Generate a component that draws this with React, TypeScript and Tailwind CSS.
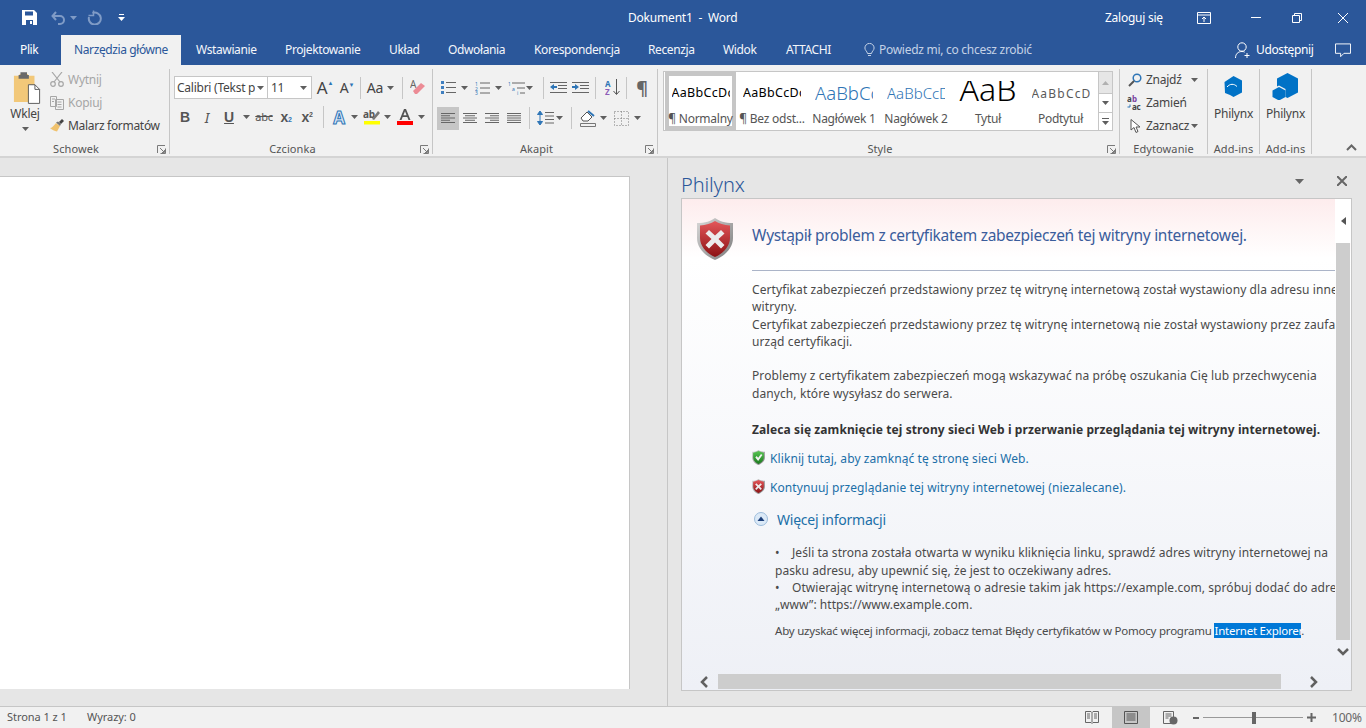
import React from "react";

const Cell = ({ className = "", children }: { className?: string; children?: React.ReactNode }) => (
  <div className={`flex items-center justify-center shrink-0 ${className}`}>{children}</div>
);

const Caret = ({ color = "#5f5f5f" }: { color?: string }) => (
  <svg width="7" height="4" viewBox="0 0 7 4"><path d="M0 0h7L3.500 4z" fill={color} /></svg>
);

const Launcher = () => (
  <svg width="9" height="9" viewBox="0 0 9 9" fill="none" stroke="#7a7a7a"><path d="M.5 8V.5H8M8.500 3.500v5h-5M3 3l4 4M7.500 5v2.500H5" /></svg>
);

const Sep = ({ className = "" }: { className?: string }) => <div className={`w-px bg-[#c6c6c6] shrink-0 ${className}`} />;

const Lines = ({ kind }: { kind: "left" | "center" | "right" | "just" }) => {
  const rows = [
    [1, 15], kind === "left" ? [1, 10] : kind === "center" ? [3, 13] : kind === "right" ? [6, 15] : [1, 15],
    [1, 15], kind === "left" ? [1, 10] : kind === "center" ? [3, 13] : kind === "right" ? [6, 15] : [1, 15],
    [1, 15],
  ];
  return (
    <svg width="16" height="12" viewBox="0 0 16 12" stroke="#666">
      {rows.map((r, i) => <path key={i} d={`M${r[0]} ${1.5 + i * 2.25}H${r[1]}`} />)}
    </svg>
  );
};

const HexBig = () => (
  <svg width="27" height="27" viewBox="0 0 27 27">
    <path d="M15.500 0L26 5.500v14L15.500 25l-2-1v-8L7 12.500 5 13.500V5.500z" fill="#0072c6" />
    <path d="M7 14l6.500 3.500V24L7 27.500 .5 24v-6.500z" fill="#0072c6" />
  </svg>
);

const HexSmall = () => (
  <svg width="19" height="21" viewBox="0 0 19 21">
    <path d="M9.500 0L18 4.500v12L9.500 21 6 19 1 17 .5 6z" fill="#0072c6" />
    <path d="M3 11c3-3.500 7-3.500 10-.5" stroke="#fff" strokeWidth="1" fill="none" />
  </svg>
);

const Shield = ({ className = "", color = "red" }: { className?: string; color?: "red" | "green" }) => {
  const id = `sh-${color}-${className.length}`;
  const a = color === "red" ? "#e4575a" : "#58c553";
  const b = color === "red" ? "#8c1214" : "#1b7a1e";
  return (
    <svg className={className} viewBox="0 0 36 42">
      <defs>
        <linearGradient id={id} x1="0" y1="0" x2="0" y2="1">
          <stop offset="0" stopColor={a} />
          <stop offset="1" stopColor={b} />
        </linearGradient>
        <linearGradient id={`${id}e`} x1="0" y1="0" x2="1" y2="1">
          <stop offset="0" stopColor="#d9d9d9" />
          <stop offset="1" stopColor="#7b7b7b" />
        </linearGradient>
      </defs>
      <path d="M18 0c4 3 10 5 18 5v15c0 10-8 18-18 22C8 38 0 30 0 20V5c8 0 14-2 18-5z" fill={`url(#${id}e)`} />
      <path d="M18 3c4 2.500 9 4 15 4.500V20c0 8.500-7 15.500-15 19C10 35.500 3 28.500 3 20V7.500C9 7 14 5.500 18 3z" fill={`url(#${id})`} />
      {color === "red" ? (
        <path d="M12 12l6 5.500L24 12l3.500 3.500-6 5.500 6 6L24 30.500l-6-6-6 6L8.500 27l6-6-6-5.500z" fill="#ececec" />
      ) : (
        <path d="M9 21l4-4 4 5 8-11 4 3-12 17z" fill="#f2f2f2" />
      )}
    </svg>
  );
};

const RibbonGroup = ({ className = "", label, launcher, children }: { className?: string; label: string; launcher?: boolean; children: React.ReactNode }) => (
  <div className={`shrink-0 flex flex-col border-r border-[#c6c6c6] h-[85px] ${className}`}>
    <div className="h-[73px] flex flex-col">{children}</div>
    <div className={`flex-1 flex items-center justify-center relative text-[11px] leading-none text-[#555] tracking-[0.1px] ${launcher ? "pr-[17px]" : ""}`}>
      {label}
      {launcher && <div className="absolute right-[3px] top-[3px] flex"><Launcher /></div>}
    </div>
  </div>
);

const tabs: [string, string][] = [
  ["Wstawianie", "w-[89px]"],
  ["Projektowanie", "w-[104px]"],
  ["Układ", "w-[59px]"],
  ["Odwołania", "w-[86px]"],
  ["Korespondencja", "w-[114px]"],
  ["Recenzja", "w-[75px]"],
  ["Widok", "w-[63px]"],
  ["ATTACHI", "w-[76px]"],
];

const styles: { t: string; l: string; w: string; c: string }[] = [
  { t: "AaBbCcDc", l: "¶ Normalny", w: "w-[71px]", c: "text-[12.5px] tracking-[0.3px] text-black" },
  { t: "AaBbCcDc", l: "¶ Bez odst...", w: "w-[72px]", c: "text-[12.5px] tracking-[0.3px] text-black" },
  { t: "AaBbCc", l: "Nagłówek 1", w: "w-[72px]", c: "text-[18.5px] font-light text-[#2e74b5]" },
  { t: "AaBbCcD", l: "Nagłówek 2", w: "w-[72px]", c: "text-[15px] font-light text-[#2e74b5]" },
  { t: "AaB", l: "Tytuł", w: "w-[72px]", c: "text-[32px] font-light text-black -translate-y-[5px]" },
  { t: "AaBbCcD", l: "Podtytuł", w: "w-[73px]", c: "text-[12px] tracking-[1.2px] text-[#5a5a5a]" },
];

export default function App() {
  return (
    <div className="w-[1366px] h-[728px] overflow-hidden flex flex-col bg-[#e6e6e6] text-[12px] font-['Noto_Sans',sans-serif] tracking-[-0.25px]">
      {/* Title bar */}
      <div className="h-[35px] shrink-0 bg-[#2b579a] flex items-center text-white">
        <div className="w-[22px] shrink-0" />
        <Cell className="w-[15px]">
          <svg width="15" height="15" viewBox="0 0 15 15"><path d="M0 0h12l3 3v12H0z" fill="#fff" /><path d="M3 1.500h8v4H3zM4 10h7v5H4z" fill="#2b579a" /><path d="M8 11h2v3H8z" fill="#fff" /></svg>
        </Cell>
        <Cell className="w-[15px] ml-[14px]">
          <svg width="15" height="14" viewBox="0 0 15 14" fill="none" stroke="#7f9bc6" strokeWidth="2"><path d="M5 1L1.500 5 5 9M2 5h7a4 4 0 0 1 0 8H7" /></svg>
        </Cell>
        <Cell className="w-[9px] ml-[3px]"><Caret color="#7f9bc6" /></Cell>
        <Cell className="w-[16px] ml-[8px]">
          <svg width="15" height="15" viewBox="0 0 15 15" fill="none" stroke="#7f9bc6" strokeWidth="2"><path d="M5.500 3A6 6 0 1 1 2 7" /><path d="M6.500 .5v5h-5" strokeWidth="1.500" /></svg>
        </Cell>
        <Cell className="w-[7px] ml-[16px]">
          <svg width="7" height="7" viewBox="0 0 7 7" fill="#fff"><path d="M1 0h5v1H1zM0 3h7L3.500 7z" /></svg>
        </Cell>
        <div className="w-[503px] shrink-0" />
        <div className="w-[220px] shrink-0 text-[12px] whitespace-pre tracking-[-0.2px]">Dokument1  -  Word</div>
        <div className="w-[257px] shrink-0" />
        <div className="w-[92px] shrink-0 whitespace-nowrap">Zaloguj się</div>
        <Cell className="w-[14px]">
          <svg width="14" height="12" viewBox="0 0 14 12" fill="none" stroke="#fff"><path d="M.5.500h13v11H.5zM.5 3h13M7 10V5M5 7l2-2 2 2" /></svg>
        </Cell>
        <Cell className="w-[10px] ml-[40px]"><div className="w-[10px] h-px bg-white" /></Cell>
        <Cell className="w-[10px] ml-[31px]">
          <svg width="10" height="10" viewBox="0 0 10 10" fill="none" stroke="#fff"><path d="M.5 2.500h7v7h-7zM2.500 2.500v-2h7v7h-2" /></svg>
        </Cell>
        <Cell className="w-[10px] ml-[36px]">
          <svg width="10" height="10" viewBox="0 0 10 10" stroke="#fff"><path d="M0 0l10 10M10 0L0 10" /></svg>
        </Cell>
      </div>

      {/* Tabs */}
      <div className="h-[30px] shrink-0 bg-[#2b579a] flex items-stretch text-white tracking-[-0.38px]">
        <div className="w-[61px] shrink-0 pl-[20px] flex items-center">Plik</div>
        <div className="w-[120px] shrink-0 bg-[#f1f1f1] text-[#2b579a] flex items-center justify-center tracking-[-0.4px]">Narzędzia główne</div>
        <div className="w-[15px] shrink-0" />
        {tabs.map(([t, w]) => (
          <div key={t} className={`${w} shrink-0 flex items-center text-[#f4f6fa]`}>{t}</div>
        ))}
        <Cell className="w-[14px]">
          <svg width="11" height="14" viewBox="0 0 11 14" fill="none" stroke="#c4d2e6"><path d="M3.500 10.500C3 8 1 7.500.9 5a4.600 4.600 0 0 1 9.200 0c-.1 2.500-2.100 3-2.600 5.500zM4 12.500h3" /></svg>
        </Cell>
        <div className="w-[358px] shrink-0 pl-[3px] flex items-center text-[#c4d2e6] tracking-[-0.28px]">Powiedz mi, co chcesz zrobić</div>
        <Cell className="w-[17px]">
          <svg width="16" height="17" viewBox="0 0 16 17" fill="none" stroke="#fff"><circle cx="7" cy="5" r="4.200" /><path d="M.5 16c0-4 2.500-6.500 6.500-6.500 1 0 2 .2 2.700.6M12 11v5M9.500 13.500h5" /></svg>
        </Cell>
        <div className="w-[84px] shrink-0 pl-[5px] flex items-center">Udostępnij</div>
        <Cell className="w-[16px]">
          <svg width="17" height="15" viewBox="0 0 17 15" fill="none" stroke="#fff"><path d="M.5.500h16v10h-7l-3.500 3.500v-3.500H.5z" /></svg>
        </Cell>
      </div>

      {/* Ribbon */}
      <div className="h-[93px] shrink-0 bg-[#f1f1f1] border-b-2 border-[#d4d4d4] flex items-start pt-[4px] text-[#444] relative">
        {/* Schowek */}
        <RibbonGroup className="w-[170px]" label="Schowek" launcher>
          <div className="flex">
            <div className="w-[50px] shrink-0 flex flex-col items-center">
              <svg width="28" height="32" viewBox="0 0 30 34" className="mt-[3px] ml-[4px]">
                <path d="M1 4h6V2h9v2h7v28H1z" fill="#f2c879" />
                <path d="M8 0h7v3h2v4H6V3h2z" fill="#6a6a6a" />
                <path d="M16.500 13.500h7l5 5v15h-12z" fill="#fff" stroke="#555" />
                <path d="M23.500 13.500v5h5" fill="none" stroke="#555" />
              </svg>
              <div className="mt-[2px] text-[12px] leading-[16px] text-[#444]">Wklej</div>
              <div className="mt-[5px] flex"><Caret /></div>
            </div>
            <div className="flex flex-col text-[#444] -mt-[1px] whitespace-nowrap">
              <div className="h-[23px] flex items-center gap-[4px] text-[#a6a6a6]">
                <svg width="14" height="15" viewBox="0 0 14 15" fill="none" stroke="#a6a6a6" strokeWidth="1.200"><path d="M2 0l8 10M12 0L4 10" /><circle cx="3" cy="12" r="2.300" /><circle cx="11" cy="12" r="2.300" /></svg>
                Wytnij
              </div>
              <div className="h-[23px] flex items-center gap-[4px] text-[#a6a6a6]">
                <svg width="14" height="14" viewBox="0 0 14 14" fill="none" stroke="#a6a6a6"><path d="M.5.500h6v10h-6zM5.500 3.500h8v10h-8zM7.500 6h4M7.500 8.500h4M7.500 11h4M2 3h3M2 5.500h2" /></svg>
                Kopiuj
              </div>
              <div className="h-[23px] flex items-center gap-[4px] tracking-[-0.3px]">
                <svg width="14" height="13" viewBox="0 0 14 13"><path d="M6 4l4 3-3 5.500C4.500 12 2 11 0 9c2 0 3-1.500 6-5z" fill="#f0c26e" /><path d="M6 3.500l2-1 3 2.500-1 2z" fill="#777" /><path d="M9 3l3-3 2 2-3 3z" fill="#444" /></svg>
                Malarz formatów
              </div>
            </div>
          </div>
        </RibbonGroup>

        {/* Czcionka */}
        <RibbonGroup className="w-[263px]" label="Czcionka" launcher>
          <div className="flex items-center h-[30px] pt-[7px]">
            <div className="ml-[4px] w-[94px] h-[23px] bg-white border border-[#c6c6c6] flex items-center pl-[2px] shrink-0 overflow-hidden">
              <div className="w-[78px] overflow-hidden whitespace-nowrap">Calibri (Tekst podstawowy)</div>
              <Cell className="w-[9px] ml-[1px]"><Caret /></Cell>
            </div>
            <div className="w-[44px] h-[23px] bg-white border border-l-0 border-[#c6c6c6] flex items-center pl-[3px] justify-between pr-[4px] shrink-0">
              11<Caret />
            </div>
            <Cell className="w-[24px] ml-[1px] text-[17px] leading-none"><span>A</span><span className="text-[#2e75b6] text-[6px] self-start mt-[1px]">▲</span></Cell>
            <Cell className="w-[20px] text-[14px] leading-none"><span>A</span><span className="text-[#2e75b6] text-[6px] self-start mt-[1px]">▼</span></Cell>
            <Sep className="h-[22px] ml-[3px]" />
            <Cell className="w-[22px] ml-[3px] text-[14px] leading-none">Aa</Cell>
            <Cell className="w-[9px]"><Caret /></Cell>
            <Sep className="h-[22px] ml-[7px]" />
            <Cell className="w-[16px] ml-[7px]">
              <svg width="16" height="17" viewBox="0 0 16 17"><text x="0" y="9" fontSize="10" fill="#666">A</text><path d="M3 12l8-8 4 3-8 8H5z" fill="#ec8b95" /></svg>
            </Cell>
          </div>
          <div className="flex items-center h-[28px] mt-[4px] pl-[4px] text-[#555] font-bold">
            <Cell className="w-[22px] text-[14px] font-['Liberation_Sans',sans-serif]">B</Cell>
            <Cell className="w-[22px] text-[14px] italic font-normal">I</Cell>
            <Cell className="w-[22px] text-[14px] underline font-['Liberation_Sans',sans-serif]">U</Cell>
            <Cell className="w-[12px]"><Caret /></Cell>
            <Cell className="w-[22px] text-[11px] font-normal line-through ml-[1px]">abc</Cell>
            <Cell className="w-[22px] text-[14px] font-['Liberation_Sans',sans-serif]">x<span className="text-[7px] text-[#2e75b6] self-end mb-[2px]">2</span></Cell>
            <Cell className="w-[20px] text-[14px] font-['Liberation_Sans',sans-serif]">x<span className="text-[7px] text-[#555] self-start mt-[3px]">2</span></Cell>
            <Sep className="h-[22px] ml-[6px]" />
            <Cell className="w-[22px] ml-[4px] text-[17px] font-bold leading-none text-[#dbe8f7] [-webkit-text-stroke:1px_#2e75b6]">A</Cell>
            <Cell className="w-[9px]"><Caret /></Cell>
            <Cell className="w-[22px] ml-[2px]">
              <svg width="18" height="16" viewBox="0 0 18 16"><text x="0" y="9" fontSize="10" fill="#555">ab</text><path d="M9 10l6-8 2 2-6 7z" fill="#777" /><path d="M1 12h16v3.500H1z" fill="#ff0" /></svg>
            </Cell>
            <Cell className="w-[9px]"><Caret /></Cell>
            <Cell className="w-[22px] ml-[2px]">
              <svg width="16" height="16" viewBox="0 0 16 16"><path d="M7 0h2l4.500 11h-2L10.300 8H5.700l-1.200 3h-2zM6.400 6.300h3.200L8 2.300z" fill="#555" /><path d="M0 12h16v4H0z" fill="#f00" /></svg>
            </Cell>
            <Cell className="w-[10px]"><Caret /></Cell>
          </div>
        </RibbonGroup>

        {/* Akapit */}
        <RibbonGroup className="w-[225px]" label="Akapit" launcher>
          <div className="flex items-center h-[30px] pt-[7px] pl-[6px]">
            <Cell className="w-[18px]">
              <svg width="15" height="13" viewBox="0 0 15 13"><path d="M0 0h3v3H0zM0 5h3v3H0zM0 10h3v3H0z" fill="#3f7fbf" /><path d="M5 1.500h10M5 6.500h10M5 11.500h10" stroke="#666" /></svg>
            </Cell>
            <Cell className="w-[11px] ml-[2px]"><Caret /></Cell>
            <Cell className="w-[18px] ml-[3px]">
              <svg width="15" height="14" viewBox="0 0 15 14"><text x="0" y="4.500" fontSize="5" fill="#2e75b6">1</text><text x="0" y="9.500" fontSize="5" fill="#2e75b6">2</text><text x="0" y="14" fontSize="5" fill="#2e75b6">3</text><path d="M5 2h10M5 7h10M5 12h10" stroke="#666" /></svg>
            </Cell>
            <Cell className="w-[11px] ml-[2px]"><Caret /></Cell>
            <Cell className="w-[18px] ml-[3px]">
              <svg width="17" height="14" viewBox="0 0 17 14"><text x="0" y="4.500" fontSize="5" fill="#2e75b6">1</text><text x="4" y="9.500" fontSize="5" fill="#2e75b6">a</text><text x="9" y="14" fontSize="5" fill="#2e75b6">i</text><path d="M4 2h13M9 7h8M12 12h5" stroke="#666" /></svg>
            </Cell>
            <Cell className="w-[9px]"><Caret /></Cell>
            <Sep className="h-[22px] ml-[9px]" />
            <Cell className="w-[18px] ml-[5px]">
              <svg width="17" height="13" viewBox="0 0 17 13"><path d="M0 1.500h17M8 4.500h9M8 7.500h9M0 11.500h17" stroke="#666" /><path d="M0 6l4-3v2h3v2H4v2z" fill="#2e75b6" /></svg>
            </Cell>
            <Cell className="w-[18px] ml-[4px]">
              <svg width="17" height="13" viewBox="0 0 17 13"><path d="M0 1.500h17M8 4.500h9M8 7.500h9M0 11.500h17" stroke="#666" /><path d="M7 6L3 3v2H0v2h3v2z" fill="#2e75b6" /></svg>
            </Cell>
            <Sep className="h-[22px] ml-[6px]" />
            <Cell className="w-[18px] ml-[7px]">
              <svg width="15" height="17" viewBox="0 0 15 17"><text x="0" y="7.500" fontSize="8" fontWeight="700" fill="#2e75b6">A</text><text x="0" y="16" fontSize="8" fontWeight="700" fill="#8d5cb8">Z</text><path d="M11.500 0v15M8.500 12l3 3.500 3-3.500" fill="none" stroke="#555" /></svg>
            </Cell>
            <Sep className="h-[22px] ml-[5px]" />
            <Cell className="w-[16px] ml-[7px] text-[18px] leading-none text-[#666] font-bold">¶</Cell>
          </div>
          <div className="flex items-center h-[28px] mt-[5px] pl-[4px]">
            <Cell className="w-[22px] h-[23px] bg-[#c6c6c6]"><Lines kind="left" /></Cell>
            <Cell className="w-[22px]"><Lines kind="center" /></Cell>
            <Cell className="w-[22px]"><Lines kind="right" /></Cell>
            <Cell className="w-[22px]"><Lines kind="just" /></Cell>
            <Sep className="h-[22px] ml-[4px]" />
            <Cell className="w-[18px] ml-[6px]">
              <svg width="17" height="16" viewBox="0 0 17 16"><path d="M3 1L.5 4.500h5zM3 15L.5 11.500h5zM3 4v8" fill="#2e75b6" stroke="#2e75b6" /><path d="M8 2.500h9M8 6h9M8 9.500h9M8 13h9" stroke="#666" /></svg>
            </Cell>
            <Cell className="w-[9px] ml-[1px]"><Caret /></Cell>
            <Sep className="h-[22px] ml-[7px]" />
            <Cell className="w-[18px] ml-[7px]">
              <svg width="17" height="17" viewBox="0 0 17 17" fill="none"><path d="M1 8l6-6 5 5-4 4H3z" stroke="#555" fill="#fff" /><path d="M8 1l6 5" stroke="#2e75b6" strokeWidth="2" /><path d="M.5 13.500h15v3H.5z" stroke="#777" /></svg>
            </Cell>
            <Cell className="w-[9px] ml-[2px]"><Caret /></Cell>
            <Cell className="w-[16px] ml-[5px]">
              <svg width="15" height="15" viewBox="0 0 15 15" fill="none" stroke="#777" strokeDasharray="1 2"><path d="M.5.500h14v14H.5zM7.500.5v14M.5 7.500h14" /></svg>
            </Cell>
            <Cell className="w-[9px] ml-[4px]"><Caret /></Cell>
          </div>
        </RibbonGroup>

        {/* Style */}
        <RibbonGroup className="w-[462px]" label="Style" launcher>
          <div className="ml-[5px] mt-[2px] w-[450px] h-[60px] bg-white border border-[#c6c6c6] flex">
            <div className="flex">
              {styles.map((s, i) => (
                <div key={s.l} className={`${s.w} shrink-0 flex flex-col items-center ${i === 0 ? "border-4 border-[#c6c6c6] ml-[1px]" : "border-4 border-white"}`}>
                  <div className="h-[35px] w-[58px] py-[5px] shrink-0">
                    <div className="h-[25px] w-[58px] overflow-hidden flex items-center justify-start whitespace-nowrap tracking-normal">
                      <span className={`${s.c} leading-none ${s.t === "AaB" ? "mx-auto" : ""}`}>{s.t}</span>
                    </div>
                  </div>
                  <div className="text-[12px] leading-[15px] text-[#555] whitespace-nowrap">{s.l}</div>
                </div>
              ))}
            </div>
            <div className="flex-1" />
            <div className="w-[14px] shrink-0 flex flex-col border-l border-[#c6c6c6]">
              <Cell className="h-[21px] bg-[#e6e6e6]"><svg width="7" height="4" viewBox="0 0 7 4"><path d="M0 4h7L3.500 0z" fill="#b0b0b0" /></svg></Cell>
              <Cell className="h-[19px] border-t border-[#c6c6c6]"><Caret /></Cell>
              <Cell className="flex-1 border-t border-[#c6c6c6]">
                <svg width="7" height="7" viewBox="0 0 7 7" fill="#5f5f5f"><path d="M0 0h7v1H0zM0 3h7L3.500 7z" /></svg>
              </Cell>
            </div>
          </div>
        </RibbonGroup>

        {/* Edytowanie */}
        <RibbonGroup className="w-[88px]" label="Edytowanie">
          <div className="flex flex-col -mt-[1px] pl-[8px] whitespace-nowrap">
            <div className="h-[23px] flex items-center">
              <Cell className="w-[14px]">
                <svg width="14" height="14" viewBox="0 0 14 14" fill="none"><circle cx="9" cy="5" r="3.800" stroke="#2e75b6" strokeWidth="1.500" /><path d="M6 8l-5 5" stroke="#555" strokeWidth="2" /></svg>
              </Cell>
              <div className="w-[49px] pl-[4px]">Znajdź</div>
              <Caret />
            </div>
            <div className="h-[23px] flex items-center">
              <Cell className="w-[16px] -ml-[1px]">
                <svg width="16" height="15" viewBox="0 0 16 15"><text x="0" y="7" fontSize="8" fontWeight="700" fill="#444">a</text><text x="5" y="7" fontSize="8" fontWeight="700" fill="#7a3fa0">b</text><text x="5" y="14.500" fontSize="8" fontWeight="700" fill="#444">ac</text><path d="M3 9.500V12H0.500" fill="none" stroke="#2e75b6" /></svg>
              </Cell>
              <div className="pl-[3px]">Zamień</div>
            </div>
            <div className="h-[23px] flex items-center">
              <Cell className="w-[14px]">
                <svg width="11" height="14" viewBox="0 0 11 14" fill="#fff" stroke="#555"><path d="M1 .5v10.500l3-2.500 2 5 2-1-2-4.500h4z" /></svg>
              </Cell>
              <div className="w-[49px] pl-[4px]">Zaznacz</div>
              <Caret />
            </div>
          </div>
        </RibbonGroup>

        {/* Add-ins */}
        <RibbonGroup className="w-[52px]" label="Add-ins">
          <div className="flex flex-col items-center pt-[7px]">
            <HexSmall />
            <div className="mt-[9px] leading-[16px]">Philynx</div>
          </div>
        </RibbonGroup>
        <RibbonGroup className="w-[52px]" label="Add-ins">
          <div className="flex flex-col items-center pt-[4px]">
            <HexBig />
            <div className="mt-[6px] leading-[16px]">Philynx</div>
          </div>
        </RibbonGroup>
        <div className="absolute right-[9px] bottom-[5px] flex">
          <svg width="11" height="7" viewBox="0 0 11 7" fill="none" stroke="#666" strokeWidth="2"><path d="M1 6l4.500-4.500L10 6" /></svg>
        </div>
      </div>

      {/* Main */}
      <div className="flex-1 min-h-0 flex">
        {/* Document */}
        <div className="w-[668px] shrink-0 border-r border-[#c6c6c6] pt-[18px] pb-[17px]">
          <div className="w-[630px] h-full bg-white border-t border-r border-[#c6c6c6]" />
        </div>
        {/* Pane */}
        <div className="flex-1 flex flex-col pl-[13px] pr-[14px] pb-[15px]">
          <div className="h-[40px] shrink-0 flex items-end relative">
            <div className="text-[20px] leading-[26px] font-light text-[#2b579a] tracking-[-0.1px]">Philynx</div>
            <div className="absolute right-[5px] top-[18px] flex items-center gap-[33px]">
              <svg width="9" height="5" viewBox="0 0 9 5"><path d="M0 0h9L4.500 5z" fill="#666" /></svg>
              <svg width="10" height="10" viewBox="0 0 10 10" stroke="#666" strokeWidth="2"><path d="M0 0l10 10M10 0L0 10" /></svg>
            </div>
          </div>
          <div className="flex-1 min-h-0 border border-[#c6c6c6] flex flex-col bg-gradient-to-b from-[#fdeced] via-white via-[12%] to-[#eef0f6]">
            <div className="flex-1 min-h-0 flex">
              <div className="w-[653px] shrink-0 overflow-hidden whitespace-nowrap text-[#4a4a4a] leading-[17.33px] text-[12px] tracking-[0.09px]">
                <div className="flex pt-[19px] pl-[15px] h-[62px]">
                  <Shield className="w-[36px] h-[42px] shrink-0" />
                  <div className="ml-[19px] mt-[5px] text-[15.5px] leading-[24px] text-[#3b5d9c] tracking-[-0.29px]">Wystąpił problem z certyfikatem zabezpieczeń tej witryny internetowej.</div>
                </div>
                <div className="ml-[70px] mt-[9px] h-px bg-[#abb4c8]" />
                <div className="ml-[70px] mt-[10px]">
                  <div>Certyfikat zabezpieczeń przedstawiony przez tę witrynę internetową został wystawiony dla adresu innej</div>
                  <div>witryny.</div>
                  <div>Certyfikat zabezpieczeń przedstawiony przez tę witrynę internetową nie został wystawiony przez zaufany</div>
                  <div>urząd certyfikacji.</div>
                  <div className="mt-[17px]">Problemy z certyfikatem zabezpieczeń mogą wskazywać na próbę oszukania Cię lub przechwycenia</div>
                  <div>danych, które wysyłasz do serwera.</div>
                  <div className="mt-[19px] font-bold text-[#333] tracking-[0.1px]">Zaleca się zamknięcie tej strony sieci Web i przerwanie przeglądania tej witryny internetowej.</div>
                  <div className="mt-[12px] flex items-center h-[17px] text-[#1b6fa8]">
                    <Shield className="w-[13px] h-[15px] shrink-0 -mt-[3px]" color="green" />
                    <span className="ml-[5px]">Kliknij tutaj, aby zamknąć tę stronę sieci Web.</span>
                  </div>
                  <div className="mt-[12px] flex items-center h-[17px] text-[#1b6fa8]">
                    <Shield className="w-[13px] h-[15px] shrink-0 -mt-[3px]" />
                    <span className="ml-[5px]">Kontynuuj przeglądanie tej witryny internetowej (niezalecane).</span>
                  </div>
                  <div className="mt-[13px] flex items-center h-[20px] text-[14px] text-[#1b6fa8] tracking-[-0.22px]">
                    <svg width="14" height="14" viewBox="0 0 14 14" className="ml-[2px] shrink-0"><circle cx="7" cy="7" r="6.500" fill="#dbe9f7" stroke="#9dbcdb" /><path d="M3.500 9L7 4.500 10.500 9z" fill="#1d3f7a" /></svg>
                    <span className="ml-[9px]">Więcej informacji</span>
                  </div>
                </div>
                <div className="ml-[93px] mt-[15px] tracking-[0.06px]">
                  <div><span className="inline-block w-[17px]">•</span>Jeśli ta strona została otwarta w wyniku kliknięcia linku, sprawdź adres witryny internetowej na</div>
                  <div>pasku adresu, aby upewnić się, że jest to oczekiwany adres.</div>
                  <div><span className="inline-block w-[17px]">•</span>Otwierając witrynę internetową o adresie takim jak https://example.com, spróbuj dodać do adresu</div>
                  <div>„www”: https://www.example.com.</div>
                  <div className="mt-[8px] text-[11.5px] tracking-[-0.22px]">Aby uzyskać więcej informacji, zobacz temat Błędy certyfikatów w Pomocy programu <span className="bg-[#0078d7] text-white">Internet Explorer</span>.</div>
                </div>
              </div>
              {/* Vertical scrollbar */}
              <div className="w-[16px] shrink-0 flex flex-col">
                <Cell className="h-[44px] bg-white">
                  <svg width="5" height="8" viewBox="0 0 5 8"><path d="M5 0v8L0 4z" fill="#555" /></svg>
                </Cell>
                <div className="h-[397px] mx-px bg-[#cdcdcd]" />
                <Cell className="flex-1 pb-[10px]">
                  <svg width="12" height="8" viewBox="0 0 12 8" fill="none" stroke="#606060" strokeWidth="2.500"><path d="M1 1l5 5 5-5" /></svg>
                </Cell>
              </div>
            </div>
            {/* Horizontal scrollbar */}
            <div className="h-[16px] shrink-0 flex">
              <Cell className="w-[36px] pl-[7px]">
                <svg width="8" height="12" viewBox="0 0 8 12" fill="none" stroke="#606060" strokeWidth="2.500"><path d="M7 1L2 6l5 5" /></svg>
              </Cell>
              <div className="w-[563px] h-[15px] bg-[#cdcdcd]" />
              <Cell className="w-[64px] pl-[1px]">
                <svg width="8" height="12" viewBox="0 0 8 12" fill="none" stroke="#606060" strokeWidth="2.500"><path d="M1 1l5 5-5 5" /></svg>
              </Cell>
            </div>
          </div>
        </div>
      </div>

      {/* Status bar */}
      <div className="h-[22px] shrink-0 bg-[#f1f1f1] border-t border-[#c6c6c6] flex items-stretch text-[#555] text-[11px] tracking-[-0.05px]">
        <div className="w-[87px] shrink-0 pl-[7px] flex items-center">Strona 1 z 1</div>
        <div className="w-[991px] shrink-0 flex items-center">Wyrazy: 0</div>
        <Cell className="w-[34px] shrink-0 pr-[6px]">
          <svg width="14" height="13" viewBox="0 0 14 13" fill="none" stroke="#666"><path d="M.5.500h5.500l1 1 1-1h5.500v11H8l-1 1-1-1H.5zM7 1.500v10M2 3h3M2 5h3M2 7h3M9 3h3M9 5h3M9 7h3" /></svg>
        </Cell>
        <Cell className="w-[38px] shrink-0 bg-[#c6c6c6]">
          <svg width="14" height="13" viewBox="0 0 14 13" fill="none" stroke="#555"><path d="M.5.500h13v12H.5zM2.500 3h9M2.500 5h9M2.500 7h9M2.500 9h9" /></svg>
        </Cell>
        <Cell className="w-[36px] shrink-0 pl-[4px]">
          <svg width="15" height="14" viewBox="0 0 15 14" fill="none"><path d="M.5.500h10v12H.5zM2.500 3h6M2.500 5h6M2.500 7h3" stroke="#666" /><circle cx="10.500" cy="9.500" r="4" fill="#666" /></svg>
        </Cell>
        <Cell className="w-[8px] ml-[6px]"><div className="w-[6px] h-[2px] bg-[#666]" /></Cell>
        <div className="w-[100px] shrink-0 ml-[3px] flex items-center">
          <div className="w-[49px] h-px bg-[#999]" />
          <div className="w-[4px] h-[12px] bg-[#666]" />
          <div className="flex-1 h-px bg-[#999]" />
        </div>
        <Cell className="w-[9px] ml-[4px]">
          <svg width="9" height="9" viewBox="0 0 9 9" stroke="#666" strokeWidth="2"><path d="M4.500 0v9M0 4.500h9" /></svg>
        </Cell>
        <div className="ml-[16px] flex items-center text-[12px] text-[#666] tracking-[-0.2px]">100%</div>
      </div>
    </div>
  );
}
